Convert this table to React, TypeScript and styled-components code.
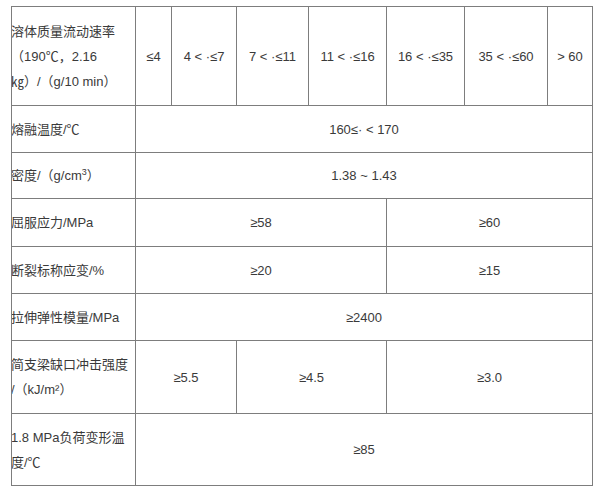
import React from 'react';
import styled, { createGlobalStyle } from 'styled-components';

const GlobalStyle = createGlobalStyle`
  html, body {
    margin: 0;
    padding: 0;
    background: #ffffff;
  }
  body {
    font-family: "Liberation Sans", "Noto Sans CJK SC", Arial, sans-serif;
  }
`;

const Page = styled.div`
  padding: 6px 0 0 11px;
`;

const Grid = styled.div`
  display: grid;
  width: fit-content;
  grid-template-columns: 123px 35px 64px 71px 77px 77px 82px 44px;
  grid-template-rows: 98px 46px 45px 47px 46px 46px 72px 71px;
  gap: 1px;
  padding: 1px;
  background: #7d7d7d;
`;

const Cell = styled.div<{ $span?: number; $head?: boolean }>`
  grid-column: span ${(p) => p.$span ?? 1};
  background: #fff;
  display: flex;
  align-items: center;
  justify-content: ${(p) => (p.$head ? 'flex-start' : 'center')};
  padding: ${(p) => (p.$head ? '0 2px 0 0' : '0')};
  font-size: 13px;
  line-height: 25px;
  color: #3a3a3a;
  white-space: nowrap;
  overflow: hidden;
`;

const Label = styled.div`
  white-space: nowrap;
  margin-left: -1px;
`;

const Sup = styled.sup`
  font-size: 9px;
  line-height: 0;
`;

type Row = { label: React.ReactNode; values: [React.ReactNode, number][] };

const rows: Row[] = [
  {
    label: (
      <>
        溶体质量流动速率
        <br />（190℃，2.16
        <br />㎏）/（g/10 min）
      </>
    ),
    values: [
      ['≤4', 1],
      ['4 < ·≤7', 1],
      ['7 < ·≤11', 1],
      ['11 < ·≤16', 1],
      ['16 < ·≤35', 1],
      ['35 < ·≤60', 1],
      ['> 60', 1],
    ],
  },
  { label: '熔融温度/℃', values: [['160≤· < 170', 7]] },
  {
    label: (
      <>
        密度/（g/cm<Sup>3</Sup>）
      </>
    ),
    values: [['1.38 ~ 1.43', 7]],
  },
  { label: '屈服应力/MPa', values: [['≥58', 4], ['≥60', 3]] },
  { label: '断裂标称应变/%', values: [['≥20', 4], ['≥15', 3]] },
  { label: '拉伸弹性模量/MPa', values: [['≥2400', 7]] },
  {
    label: (
      <>
        简支梁缺口冲击强度
        <br />/（kJ/m²）
      </>
    ),
    values: [['≥5.5', 2], ['≥4.5', 2], ['≥3.0', 3]],
  },
  {
    label: (
      <>
        1.8 MPa负荷变形温
        <br />度/℃
      </>
    ),
    values: [['≥85', 7]],
  },
];

const App: React.FC = () => {
  return (
    <>
      <GlobalStyle />
      <Page>
        <Grid>
          {rows.map((row, i) => (
            <React.Fragment key={i}>
              <Cell $head>
                <Label>{row.label}</Label>
              </Cell>
              {row.values.map(([text, span], j) => (
                <Cell key={j} $span={span}>
                  {text}
                </Cell>
              ))}
            </React.Fragment>
          ))}
        </Grid>
      </Page>
    </>
  );
};

export default App;
